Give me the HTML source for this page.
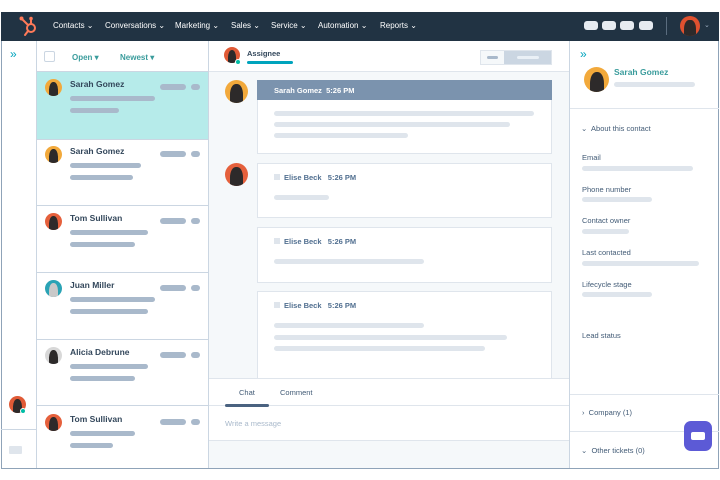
<!DOCTYPE html>
<html><head><style>
*{margin:0;padding:0;box-sizing:border-box}
body{width:720px;height:480px;background:#fff;position:relative;overflow:hidden;font-family:"Liberation Sans",sans-serif}
.a{position:absolute}
.b{position:absolute;border-radius:3px}
.nav{font-size:8px;color:#fff;top:21px}
.nm{font-size:8.5px;font-weight:bold;color:#33475b}
.lb{font-size:7.5px;color:#425b76}
.g{background:#a9b9cb}
.l{background:#dfe5ec}
.av{position:absolute;border-radius:50%;overflow:hidden}
.av i{position:absolute;left:22%;top:18%;width:56%;height:100%;border-radius:45% 45% 30% 30%;background:#2d2a2a}
</style></head><body>
<div class="a" style="left:1px;top:12px;width:718px;height:457px;border:1px solid #8fa3b8;background:#fff"></div>
<!-- nav -->
<div class="a" style="left:1px;top:12px;width:718px;height:29px;background:#213343"></div>
<svg class="a" style="left:14px;top:14px" width="28" height="26" viewBox="0 0 28 26">
<g stroke="#ff7a59" stroke-width="2" fill="none" stroke-linecap="round">
<circle cx="17" cy="14" r="4"/><line x1="17" y1="10" x2="17" y2="5"/><line x1="14" y1="11" x2="8" y2="5"/><line x1="14" y1="17" x2="11" y2="21"/></g>
<circle cx="17" cy="4.5" r="1.8" fill="#ff7a59"/><circle cx="7.5" cy="4.5" r="2" fill="#ff7a59"/></svg>
<div class="a nav" style="left:53px">Contacts ⌄</div>
<div class="a nav" style="left:105px">Conversations ⌄</div>
<div class="a nav" style="left:175px">Marketing ⌄</div>
<div class="a nav" style="left:231px">Sales ⌄</div>
<div class="a nav" style="left:271px">Service ⌄</div>
<div class="a nav" style="left:318px">Automation ⌄</div>
<div class="a nav" style="left:380px">Reports ⌄</div>
<div class="b" style="left:584px;top:21px;width:14px;height:9px;background:#e6ebf1"></div>
<div class="b" style="left:602px;top:21px;width:14px;height:9px;background:#e6ebf1"></div>
<div class="b" style="left:620px;top:21px;width:14px;height:9px;background:#e6ebf1"></div>
<div class="b" style="left:639px;top:21px;width:14px;height:9px;background:#e6ebf1"></div>
<div class="a" style="left:666px;top:17px;width:1px;height:18px;background:#5a6c7e"></div>
<div class="av" style="left:680px;top:16px;width:20px;height:20px;background:#e0512f"><i></i></div>
<div class="a nav" style="left:704px;top:21px;font-size:7px;color:#9fb0c2">⌄</div>
<!-- left rail -->
<div class="a" style="left:36px;top:41px;width:1px;height:427px;background:#cbd6e2"></div>
<div class="a" style="left:10px;top:47px;font-size:12px;color:#00a4bd">»</div>
<div class="av" style="left:9px;top:396px;width:17px;height:17px;background:#e05a36"><i></i></div>
<div class="av" style="left:20px;top:408px;width:6px;height:6px;background:#00bda5;border:1px solid #fff"></div>
<div class="a" style="left:1px;top:429px;width:35px;height:1px;background:#cbd6e2"></div>
<div class="b" style="left:9px;top:446px;width:13px;height:8px;background:#dfe5ec;border-radius:1px"></div>
<!-- list -->
<div class="a" style="left:208px;top:41px;width:1px;height:427px;background:#cbd6e2"></div>
<div class="a" style="left:44px;top:51px;width:11px;height:11px;border:1px solid #cbd6e2;border-radius:2px"></div>
<div class="a" style="left:72px;top:53px;font-size:8px;font-weight:bold;color:#3a9c9c">Open ▾</div>
<div class="a" style="left:120px;top:53px;font-size:8px;font-weight:bold;color:#3a9c9c">Newest ▾</div>
<div class="a" style="left:36px;top:71px;width:172px;height:1px;background:#cbd6e2"></div>
<div class="a" style="left:37px;top:72px;width:171px;height:67px;background:#b6ebea"></div>

<div class="a" style="left:36px;top:139px;width:172px;height:1px;background:#cbd6e2"></div>
<div class="a" style="left:36px;top:205px;width:172px;height:1px;background:#cbd6e2"></div>
<div class="a" style="left:36px;top:272px;width:172px;height:1px;background:#cbd6e2"></div>
<div class="a" style="left:36px;top:339px;width:172px;height:1px;background:#cbd6e2"></div>
<div class="a" style="left:36px;top:405px;width:172px;height:1px;background:#cbd6e2"></div>

<div class="av" style="left:45px;top:79px;width:17px;height:17px;background:#f2a93b"><i></i></div>
<div class="a nm" style="left:70px;top:79px">Sarah Gomez</div>
<div class="b g" style="left:70px;top:96px;width:85px;height:5px"></div><div class="b g" style="left:70px;top:108px;width:49px;height:5px"></div>
<div class="b g" style="left:160px;top:84px;width:26px;height:6px"></div><div class="b g" style="left:191px;top:84px;width:9px;height:6px"></div>

<div class="av" style="left:45px;top:146px;width:17px;height:17px;background:#f2a93b"><i></i></div>
<div class="a nm" style="left:70px;top:146px">Sarah Gomez</div>
<div class="b g" style="left:70px;top:163px;width:71px;height:5px"></div><div class="b g" style="left:70px;top:175px;width:63px;height:5px"></div>
<div class="b g" style="left:160px;top:151px;width:26px;height:6px"></div><div class="b g" style="left:191px;top:151px;width:9px;height:6px"></div>

<div class="av" style="left:45px;top:213px;width:17px;height:17px;background:#e5603c"><i></i></div>
<div class="a nm" style="left:70px;top:213px">Tom Sullivan</div>
<div class="b g" style="left:70px;top:230px;width:78px;height:5px"></div><div class="b g" style="left:70px;top:242px;width:65px;height:5px"></div>
<div class="b g" style="left:160px;top:218px;width:26px;height:6px"></div><div class="b g" style="left:191px;top:218px;width:9px;height:6px"></div>

<div class="av" style="left:45px;top:280px;width:17px;height:17px;background:#2aa3b5"><i style="background:#c9c9c9"></i></div>
<div class="a nm" style="left:70px;top:280px">Juan Miller</div>
<div class="b g" style="left:70px;top:297px;width:85px;height:5px"></div><div class="b g" style="left:70px;top:309px;width:78px;height:5px"></div>
<div class="b g" style="left:160px;top:285px;width:26px;height:6px"></div><div class="b g" style="left:191px;top:285px;width:9px;height:6px"></div>

<div class="av" style="left:45px;top:347px;width:17px;height:17px;background:#d8d8d8"><i></i></div>
<div class="a nm" style="left:70px;top:347px">Alicia Debrune</div>
<div class="b g" style="left:70px;top:364px;width:78px;height:5px"></div><div class="b g" style="left:70px;top:376px;width:65px;height:5px"></div>
<div class="b g" style="left:160px;top:352px;width:26px;height:6px"></div><div class="b g" style="left:191px;top:352px;width:9px;height:6px"></div>

<div class="av" style="left:45px;top:414px;width:17px;height:17px;background:#e5603c"><i></i></div>
<div class="a nm" style="left:70px;top:414px">Tom Sullivan</div>
<div class="b g" style="left:70px;top:431px;width:65px;height:5px"></div><div class="b g" style="left:70px;top:443px;width:43px;height:5px"></div>
<div class="b g" style="left:160px;top:419px;width:26px;height:6px"></div><div class="b g" style="left:191px;top:419px;width:9px;height:6px"></div>

<!-- chat -->
<div class="a" style="left:209px;top:71px;width:360px;height:397px;background:#f5f8fa"></div>
<div class="a" style="left:209px;top:71px;width:360px;height:1px;background:#dfe5ec"></div>
<div class="av" style="left:224px;top:47px;width:16px;height:16px;background:#e05a36"><i></i></div>
<div class="av" style="left:235px;top:59px;width:6px;height:6px;background:#00bda5;border:1px solid #fff"></div>
<div class="a nm" style="left:247px;top:49px;font-size:7.5px">Assignee</div>
<div class="b" style="left:247px;top:61px;width:46px;height:3px;background:#00a4bd"></div>
<div class="a" style="left:480px;top:50px;width:72px;height:15px;background:#cbd6e2;border:1px solid #dfe5ec"></div>
<div class="a" style="left:481px;top:51px;width:23px;height:13px;background:#f5f8fa"></div>
<div class="b" style="left:487px;top:56px;width:11px;height:3px;background:#a9b9cb"></div>
<div class="b" style="left:517px;top:56px;width:22px;height:3px;background:#eaf0f6"></div>
<div class="a" style="left:569px;top:41px;width:1px;height:427px;background:#cbd6e2"></div>

<div class="av" style="left:225px;top:80px;width:23px;height:23px;background:#f2a93b"><i></i></div>
<div class="a" style="left:257px;top:80px;width:295px;height:74px;background:#fff;border:1px solid #dfe5ec"></div>
<div class="a" style="left:257px;top:80px;width:295px;height:20px;background:#7b93ae"></div>
<div class="a" style="left:274px;top:86px;font-size:7.5px;font-weight:bold;color:#fff">Sarah Gomez&nbsp;&nbsp;5:26 PM</div>
<div class="b l" style="left:274px;top:111px;width:260px;height:5px"></div>
<div class="b l" style="left:274px;top:122px;width:236px;height:5px"></div>
<div class="b l" style="left:274px;top:133px;width:134px;height:5px"></div>

<div class="av" style="left:225px;top:163px;width:23px;height:23px;background:#e5603c"><i></i></div>
<div class="a" style="left:257px;top:163px;width:295px;height:55px;background:#fff;border:1px solid #dfe5ec"></div>
<div class="a" style="left:274px;top:174px;width:6px;height:6px;background:#dfe5ec"></div>
<div class="a lb" style="left:284px;top:173px;font-weight:bold;color:#516f90">Elise Beck&nbsp;&nbsp;&nbsp;5:26 PM</div>
<div class="b l" style="left:274px;top:195px;width:55px;height:5px"></div>

<div class="a" style="left:257px;top:227px;width:295px;height:56px;background:#fff;border:1px solid #dfe5ec"></div>
<div class="a" style="left:274px;top:238px;width:6px;height:6px;background:#dfe5ec"></div>
<div class="a lb" style="left:284px;top:237px;font-weight:bold;color:#516f90">Elise Beck&nbsp;&nbsp;&nbsp;5:26 PM</div>
<div class="b l" style="left:274px;top:259px;width:150px;height:5px"></div>

<div class="a" style="left:257px;top:291px;width:295px;height:88px;background:#fff;border:1px solid #dfe5ec"></div>
<div class="a" style="left:274px;top:302px;width:6px;height:6px;background:#dfe5ec"></div>
<div class="a lb" style="left:284px;top:301px;font-weight:bold;color:#516f90">Elise Beck&nbsp;&nbsp;&nbsp;5:26 PM</div>
<div class="b l" style="left:274px;top:323px;width:150px;height:5px"></div>
<div class="b l" style="left:274px;top:335px;width:233px;height:5px"></div>
<div class="b l" style="left:274px;top:346px;width:211px;height:5px"></div>

<div class="a" style="left:209px;top:378px;width:360px;height:63px;background:#fff;border-top:1px solid #dfe5ec;border-bottom:1px solid #dfe5ec"></div>
<div class="a lb" style="left:239px;top:388px">Chat</div>
<div class="a lb" style="left:280px;top:388px">Comment</div>
<div class="a" style="left:209px;top:405px;width:360px;height:1px;background:#dfe5ec"></div>
<div class="b" style="left:225px;top:404px;width:44px;height:3px;background:#4a6280"></div>
<div class="a" style="left:225px;top:419px;font-size:7.5px;color:#a9b9cb">Write a message</div>

<!-- right -->
<div class="a" style="left:580px;top:47px;font-size:12px;color:#00a4bd">»</div>
<div class="av" style="left:584px;top:67px;width:25px;height:25px;background:#f2a93b"><i></i></div>
<div class="a" style="left:614px;top:67px;font-size:8.5px;font-weight:bold;color:#3a9c9c">Sarah Gomez</div>
<div class="b l" style="left:614px;top:82px;width:81px;height:5px"></div>
<div class="a" style="left:570px;top:108px;width:149px;height:1px;background:#dfe5ec"></div>
<div class="a lb" style="left:581px;top:124px">⌄&nbsp; About this contact</div>
<div class="a lb" style="left:582px;top:153px">Email</div><div class="b l" style="left:582px;top:166px;width:111px;height:5px"></div>
<div class="a lb" style="left:582px;top:185px">Phone number</div><div class="b l" style="left:582px;top:197px;width:70px;height:5px"></div>
<div class="a lb" style="left:582px;top:216px">Contact owner</div><div class="b l" style="left:582px;top:229px;width:47px;height:5px"></div>
<div class="a lb" style="left:582px;top:248px">Last contacted</div><div class="b l" style="left:582px;top:261px;width:117px;height:5px"></div>
<div class="a lb" style="left:582px;top:280px">Lifecycle stage</div><div class="b l" style="left:582px;top:292px;width:70px;height:5px"></div>
<div class="a lb" style="left:582px;top:331px">Lead status</div>
<div class="a" style="left:570px;top:394px;width:149px;height:1px;background:#dfe5ec"></div>
<div class="a lb" style="left:582px;top:408px">›&nbsp;&nbsp;Company (1)</div>
<div class="a" style="left:570px;top:431px;width:149px;height:1px;background:#dfe5ec"></div>
<div class="a lb" style="left:581px;top:446px">⌄&nbsp; Other tickets (0)</div>
<div class="b" style="left:684px;top:421px;width:28px;height:30px;background:#5c5ad6;border-radius:7px"></div>
<div class="b" style="left:691px;top:432px;width:14px;height:8px;background:#fff;border-radius:2px"></div>
</body></html>
